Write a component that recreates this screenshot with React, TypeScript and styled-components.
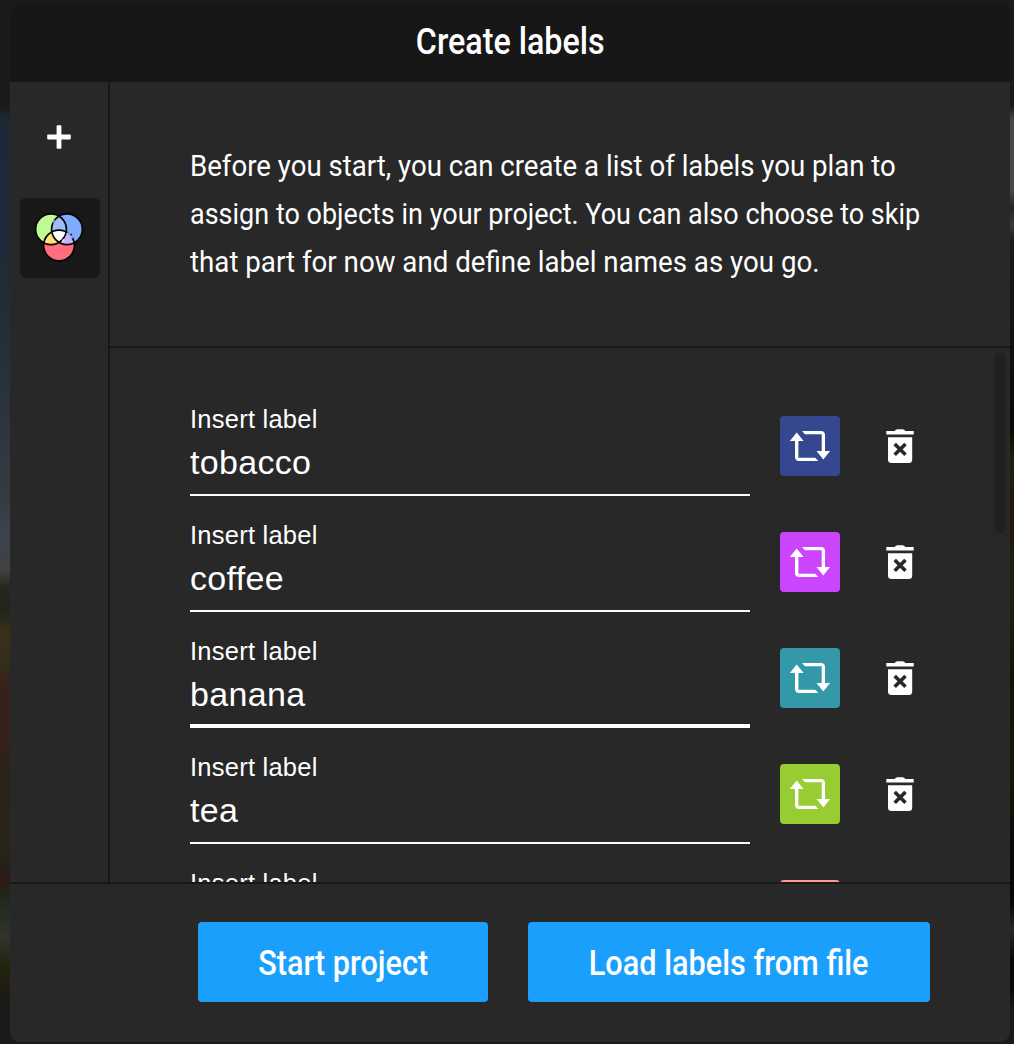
import React from "react";
import styled, { createGlobalStyle } from "styled-components";

const GlobalStyle = createGlobalStyle`
  * { box-sizing: border-box; }
  body { margin: 0; background: #1a1a1a; overflow: hidden; }
`;

const Page = styled.div`
  display: grid;
  grid-template-columns: 10px 1000px 4px;
  height: 1044px;
  background: #1a1a1a;
  color: #fff;
  font-family: Roboto, "Noto Sans", sans-serif;
`;

const LeftBackdrop = styled.div`
  background: linear-gradient(
    #1a1a1a 106px, #1e2735 118px, #202a38 240px, #242e38 330px, #343c43 500px,
    #3b434d 528px, #404141 570px, #25281f 587px, #23251a 610px, #393019 633px,
    #332e1b 660px, #35231a 685px, #352219 735px, #292318 775px, #282519 840px,
    #24211a 865px, #2b1b14 880px, #20271a 895px, #30342b 937px, #22240f 965px,
    #201b13 990px, #1a1a1a 1006px
  );
`;

const RightBackdrop = styled.div`
  background: linear-gradient(
    #1a1a1a 106px, #46494c 120px, #45494b 190px, #24251e 208px, #343b40 225px,
    #1b1b13 242px, #14140c 320px, #090905 430px, #20200c 460px, #22170c 510px,
    #211c0c 560px, #211b0d 620px, #14130a 670px, #171509 780px, #070704 860px,
    #070602 900px, #2a2521 930px, #070704 960px, #0a0a07 990px, #1a1a1a 1010px
  );
`;

const Dialog = styled.div`
  display: flex;
  flex-direction: column;
  height: 1040px;
  margin: 2px 0;
  border-radius: 10px;
  overflow: hidden;
  background: #282828;
`;

const Header = styled.header`
  display: flex;
  align-items: center;
  justify-content: center;
  height: 80px;
  background: #171717;
`;

const Condensed = styled.span<{ $scale: number; $origin?: string }>`
  display: inline-block;
  white-space: nowrap;
  transform: scaleX(${(p) => p.$scale});
  transform-origin: ${(p) => p.$origin ?? "center"};
`;

const Title = styled.h1`
  margin: 0;
  font-size: 37px;
  font-weight: 500;
  line-height: 80px;
`;

const Main = styled.div`
  display: flex;
  height: 800px;
`;

const Sidebar = styled.nav`
  display: flex;
  flex-direction: column;
  align-items: center;
  width: 100px;
  padding: 16px 0 0;
  gap: 20px;
  border-right: 2px solid #181818;
`;

const SideButton = styled.button<{ $active?: boolean }>`
  display: block;
  width: 80px;
  height: 80px;
  margin-left: 2px;
  padding: 0;
  border: 0;
  border-radius: 6px;
  background: ${(p) => (p.$active ? "#181818" : "transparent")};
`;

const Content = styled.section`
  display: flex;
  flex: 1;
  flex-direction: column;
  min-width: 0;
`;

const Intro = styled.div`
  height: 266px;
  padding: 60px 80px 0;
  border-bottom: 2px solid #181818;
  font-size: 29px;
  line-height: 48px;
`;

const IntroLine = styled.div`
  height: 48px;
`;

const ListArea = styled.div`
  display: flex;
  justify-content: space-between;
  height: 534px;
  overflow: hidden;
`;

const Rows = styled.div`
  padding: 50px 0 0 80px;
`;

const ScrollThumb = styled.div`
  width: 12px;
  height: 182px;
  margin: 4px 4px 0 0;
  border-radius: 6px;
  background: #212121;
`;

const Row = styled.div`
  display: flex;
  align-items: flex-start;
  height: 116px;
`;

const Field = styled.label<{ $focused?: boolean }>`
  display: flex;
  flex-direction: column;
  width: 560px;
  height: 98px;
  padding-top: 6px;
  border-bottom: ${(p) => (p.$focused ? 4 : 2)}px solid #fff;
  font-family: "Liberation Sans", Arial, sans-serif;
`;

const FieldLabel = styled.span`
  font-size: 25.5px;
  line-height: 30px;
  letter-spacing: 0.24px;
`;

const FieldValue = styled.span`
  margin-top: 8px;
  font-size: 34px;
  line-height: 40px;
  letter-spacing: 0.32px;
`;

const ColorButton = styled.button<{ $color: string }>`
  width: 60px;
  height: 60px;
  margin: 18px 0 0 30px;
  padding: 0;
  border: 0;
  border-radius: 4px;
  background: ${(p) => p.$color};
`;

const DeleteButton = styled.button`
  width: 60px;
  height: 60px;
  margin: 18px 0 0 30px;
  padding: 0;
  border: 0;
  background: transparent;
`;

const Icon = styled.svg`
  display: block;
`;

const Footer = styled.footer`
  display: flex;
  flex: 1;
  justify-content: flex-end;
  gap: 40px;
  padding: 38px 80px 0 0;
  border-top: 2px solid #181818;
`;

const Action = styled.button<{ $width: number }>`
  display: flex;
  align-items: center;
  justify-content: center;
  width: ${(p) => p.$width}px;
  height: 80px;
  padding: 3px 0 0;
  border: 0;
  border-radius: 4px;
  background: #1b9ffc;
  color: #fff;
  font: 500 35px/77px Roboto, "Noto Sans", sans-serif;
`;

const PlusIcon = () => (
  <Icon width="80" height="80" viewBox="0 0 80 80" fill="#fff">
    <rect x="36.6" y="27.2" width="4.8" height="23.6" rx="0.8" />
    <rect x="27.2" y="36.6" width="23.6" height="4.8" rx="0.8" />
  </Icon>
);

const ColorsIcon = () => (
  <Icon width="80" height="80" viewBox="0 0 80 80">
    <defs>
      <clipPath id="green"><circle cx="31" cy="31.3" r="15.4" /></clipPath>
      <clipPath id="blue"><circle cx="47" cy="31.3" r="15.4" /></clipPath>
    </defs>
    <circle cx="39" cy="47.5" r="15.4" fill="#ff6e7c" />
    <circle cx="31" cy="31.3" r="15.4" fill="#c0fa95" />
    <circle cx="47" cy="31.3" r="15.4" fill="#80aafc" />
    <circle cx="31" cy="31.3" r="15.4" fill="#9fbdfc" clipPath="url(#blue)" />
    <circle cx="39" cy="47.5" r="15.4" fill="#ffe17a" clipPath="url(#green)" />
    <g clipPath="url(#blue)">
      <circle cx="39" cy="47.5" r="15.4" fill="#c3b3fa" />
      <circle cx="39" cy="47.5" r="15.4" fill="#fff" clipPath="url(#green)" />
    </g>
    <g fill="none" stroke="#050505" strokeWidth="1.7">
      <circle cx="31" cy="31.3" r="15.4" />
      <circle cx="47" cy="31.3" r="15.4" />
      <circle cx="39" cy="47.5" r="15.4" />
    </g>
    <path d="M33.1 24.8l1.5-2.8" stroke="#9fbdfc" strokeWidth="1.2" />
    <path d="M44.1 41.2l-1.4 2" stroke="#e6e0fc" strokeWidth="2" />
    <path d="M47.2 34.7l5.5 5.4" stroke="#a4adfb" strokeWidth="2.1" />
    <circle cx="51.3" cy="36.6" r="0.9" fill="#111" />
  </Icon>
);

const RepeatIcon = () => (
  <Icon width="60" height="60" viewBox="0 0 60 60" fill="#fff">
    <path d="M16.7 16.5L23.6 25H18.4V41.7H35.2L38.4 45H19.2Q15 45 15 40.8V25H9.8Z" />
    <path d="M22 15H40.8Q45 15 45 19.2V35H50.1L43.3 43.5L36.5 35H41.7V18.2H25Z" />
  </Icon>
);

const TrashIcon = () => (
  <Icon width="60" height="60" viewBox="0 0 60 60">
    <path d="M16.3 15H24.8Q25.4 13.2 27.5 13.2H32.5Q34.6 13.2 35.2 15H43.7V18.4H16.3Z" fill="#fff" />
    <path d="M18 21.3H42.2V43.5Q42.2 47 38.7 47H21.5Q18 47 18 43.5Z" fill="#fff" />
    <path d="M24.7 28L35.5 38.8M35.5 28L24.7 38.8" stroke="#282828" strokeWidth="3.6" />
  </Icon>
);

const intro = [
  { text: "Before you start, you can create a list of labels you plan to", scale: 0.952 },
  { text: "assign to objects in your project. You can also choose to skip", scale: 0.931 },
  { text: "that part for now and define label names as you go.", scale: 0.955 },
];

const labels = [
  { name: "tobacco", color: "#35478f" },
  { name: "coffee", color: "#cb45ff" },
  { name: "banana", color: "#3399a9", focused: true },
  { name: "tea", color: "#97cc32" },
  { name: "", color: "#ff9a94" },
];

export default function App() {
  return (
    <>
      <GlobalStyle />
      <Page>
        <LeftBackdrop />
        <Dialog>
          <Header>
            <Title><Condensed $scale={0.872}>Create labels</Condensed></Title>
          </Header>
          <Main>
            <Sidebar>
              <SideButton aria-label="Add label"><PlusIcon /></SideButton>
              <SideButton $active aria-label="Label colors"><ColorsIcon /></SideButton>
            </Sidebar>
            <Content>
              <Intro>
                {intro.map((line) => (
                  <IntroLine key={line.text}>
                    <Condensed $scale={line.scale} $origin="left">{line.text}</Condensed>
                  </IntroLine>
                ))}
              </Intro>
              <ListArea>
                <Rows>
                  {labels.map((label) => (
                    <Row key={label.color}>
                      <Field $focused={label.focused}>
                        <FieldLabel>Insert label</FieldLabel>
                        <FieldValue>{label.name}</FieldValue>
                      </Field>
                      <ColorButton $color={label.color} aria-label="Change color"><RepeatIcon /></ColorButton>
                      <DeleteButton aria-label="Delete label"><TrashIcon /></DeleteButton>
                    </Row>
                  ))}
                </Rows>
                <ScrollThumb />
              </ListArea>
            </Content>
          </Main>
          <Footer>
            <Action $width={290}><Condensed $scale={0.875}>Start project</Condensed></Action>
            <Action $width={402}><Condensed $scale={0.876}>Load labels from file</Condensed></Action>
          </Footer>
        </Dialog>
        <RightBackdrop />
      </Page>
    </>
  );
}
